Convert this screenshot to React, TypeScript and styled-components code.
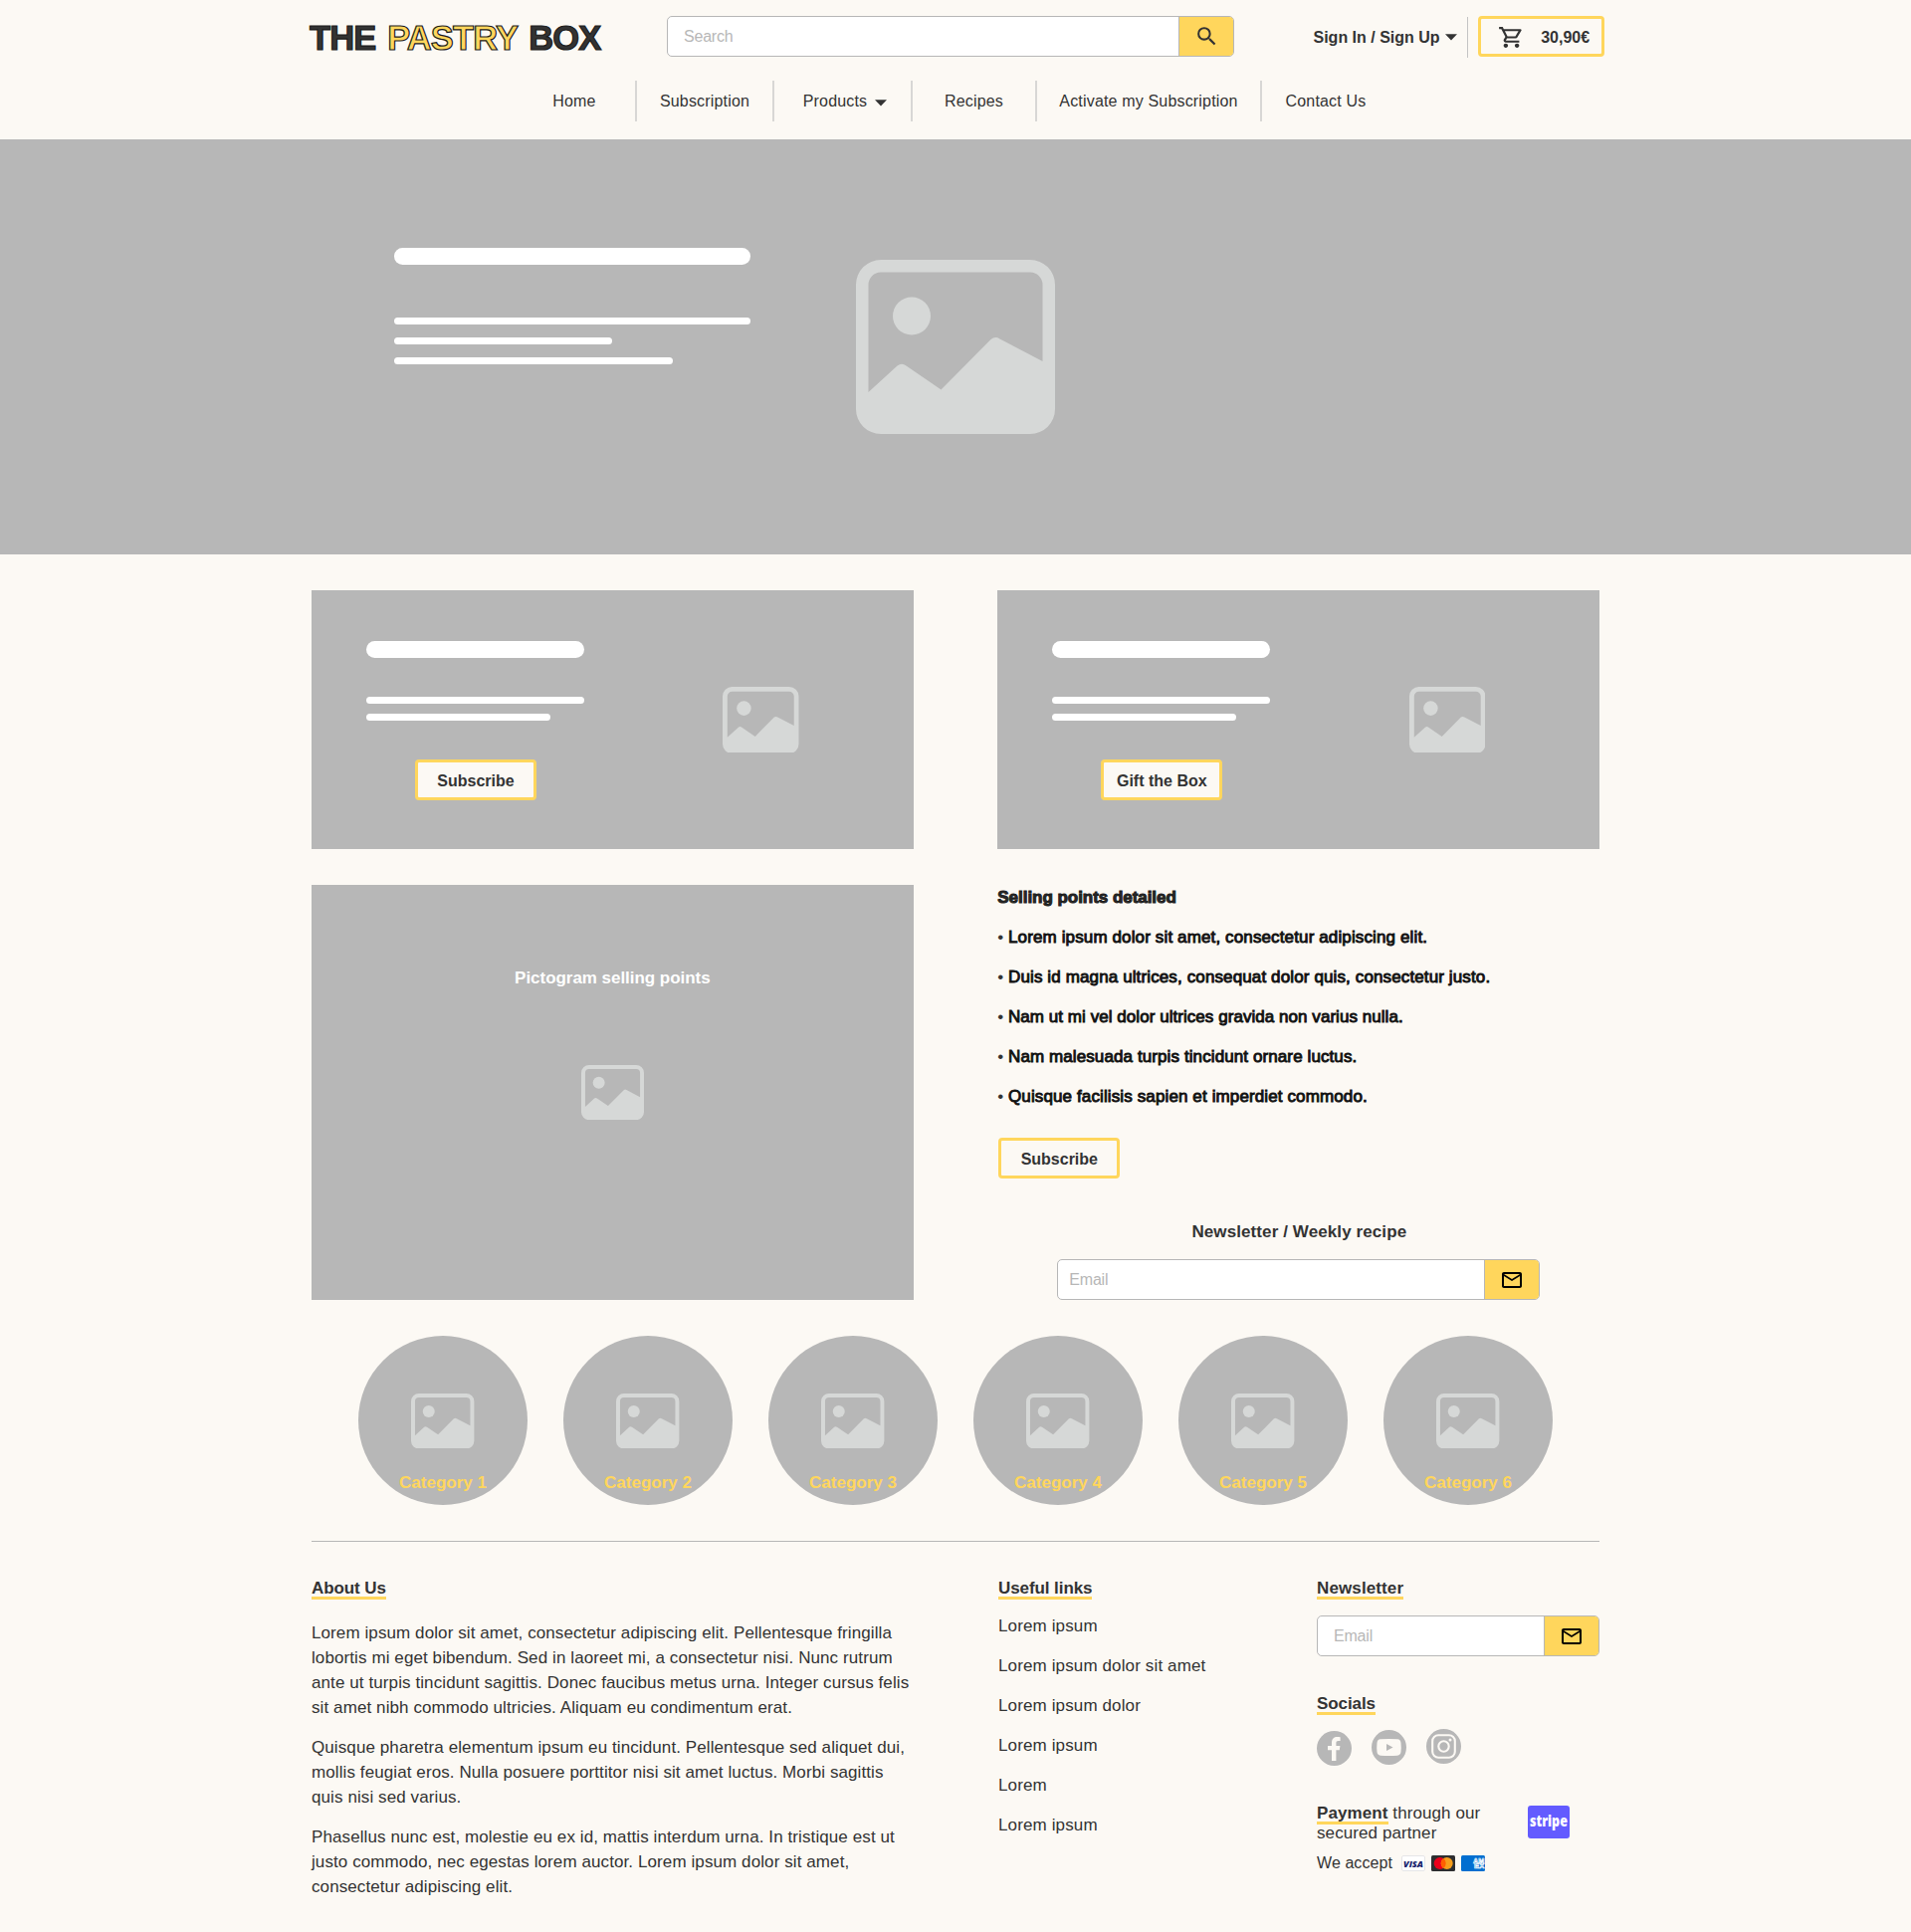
import React from "react";
import styled, { createGlobalStyle } from "styled-components";

const font = '"Liberation Sans", Arial, sans-serif';
const yellow = "#ffd65c";
const grey = "#b7b7b7";
const ink = "#333333";
const cream = "#fcf9f4";

const GlobalStyle = createGlobalStyle`
  * { box-sizing: border-box; }
  body { margin: 0; background: ${cream}; font-family: ${font}; color: ${ink}; }
  h2, h3, p, ul { margin: 0; padding: 0; }
  ul { list-style: none; }
  a { color: inherit; text-decoration: none; }
  button { font-family: inherit; cursor: pointer; }
  svg { display: block; flex: none; }
`;

const Page = styled.div`
  width: 1920px;
  height: 1941px;
  overflow: hidden;
`;

/* Header */
const Header = styled.header`
  height: 140px;
  padding-top: 16px;
`;
const TopBar = styled.div`
  display: flex;
  align-items: flex-start;
  height: 41px;
  padding-left: 311px;
`;
const Logo = styled.a`
  width: 359px;
  padding-top: 2px;
  font-size: 34.5px;
  line-height: 41px;
  font-weight: 700;
  letter-spacing: -0.85px;
  word-spacing: 3px;
  white-space: nowrap;
  -webkit-text-stroke: 1.2px #1c1c1c;
`;
const LogoAccent = styled.span`
  color: ${yellow};
`;
const Field = styled.form<{ $width: number; $button: number }>`
  display: grid;
  grid-template-columns: 1fr ${(p) => p.$button}px;
  width: ${(p) => p.$width}px;
  height: 41px;
  border: 1px solid ${grey};
  border-radius: 5px;
  background: #fff;
  overflow: hidden;
`;
const Input = styled.input<{ $pad: number }>`
  min-width: 0;
  border: 0;
  padding: 0 0 0 ${(p) => p.$pad}px;
  background: transparent;
  font: 16px ${font};
  letter-spacing: -0.2px;
  outline: none;
  &::placeholder {
    color: ${grey};
    opacity: 1;
  }
`;
const FieldButton = styled.button`
  display: flex;
  align-items: center;
  justify-content: center;
  padding: 0;
  border: 0;
  border-left: 1px solid ${grey};
  background: ${yellow};
`;
const SignIn = styled.a`
  display: flex;
  align-items: center;
  gap: 5px;
  height: 41px;
  margin-left: 79.5px;
  padding-top: 2px;
  font-size: 16px;
  font-weight: 700;
  white-space: nowrap;
`;
const AccountDivider = styled.span`
  width: 1px;
  height: 41px;
  margin: 1px 10px 0 10.5px;
  background: #c4c4c4;
`;
const CartButton = styled.button`
  display: flex;
  align-items: center;
  justify-content: space-between;
  width: 127px;
  height: 41px;
  padding: 2px 12px 0 17px;
  border: 3px solid ${yellow};
  border-radius: 4px;
  background: transparent;
  color: ${ink};
  font-size: 16px;
  font-weight: 700;
`;
const Nav = styled.nav`
  display: flex;
  margin: 24px 0 0 516px;
`;
const NavItem = styled.a<{ $width: number; $last?: boolean; $shift?: number }>`
  display: flex;
  align-items: center;
  justify-content: center;
  gap: 8px;
  width: ${(p) => p.$width}px;
  height: 41px;
  padding-left: ${(p) => p.$shift ?? 0}px;
  border-right: ${(p) => (p.$last ? "0" : "2px solid #d8d7d5")};
  font-size: 16px;
  letter-spacing: 0.17px;
  white-space: nowrap;
`;
const NavCaret = styled.span`
  padding-top: 3px;
`;

/* Placeholders */
const Hero = styled.section`
  display: flex;
  align-items: flex-start;
  height: 417px;
  padding-left: 396px;
  background: ${grey};
`;
const HeroCopy = styled.div`
  width: 464px;
  padding-top: 109px;
`;
const HeroArt = styled.div`
  padding-top: 121px;
`;
const TitleBar = styled.div<{ $width: number; $after: number }>`
  width: ${(p) => p.$width}px;
  height: 17px;
  margin-bottom: ${(p) => p.$after}px;
  border-radius: 8.5px;
  background: #fff;
`;
const TextBar = styled.div<{ $width: number; $after: number }>`
  width: ${(p) => p.$width}px;
  height: 7px;
  margin-bottom: ${(p) => p.$after}px;
  border-radius: 3.5px;
  background: #fff;
`;

/* Main */
const Container = styled.div`
  width: 1294px;
  margin: 0 auto;
`;
const Main = styled.main`
  display: flex;
  flex-direction: column;
  gap: 36px;
  padding: 36px 0;
`;
const TwoColumns = styled.div`
  display: grid;
  grid-template-columns: 604.7px 604.7px;
  justify-content: space-between;
`;
const PromoCard = styled.section`
  display: flex;
  height: 260px;
  padding-left: 55px;
  background: ${grey};
`;
const PromoCopy = styled.div`
  width: 358.3px;
  padding-top: 51px;
`;
const PromoArt = styled.div`
  padding-top: 96.5px;
`;
const OutlineButton = styled.button<{ $left?: number; $top?: number }>`
  display: block;
  width: 122px;
  height: 41px;
  margin: ${(p) => p.$top ?? 0}px 0 0 ${(p) => p.$left ?? 0}px;
  padding: 2px 0 0;
  border: 3px solid ${yellow};
  border-radius: 4px;
  background: ${cream};
  color: ${ink};
  font-size: 16px;
  font-weight: 700;
  white-space: nowrap;
`;
const Pictogram = styled.section`
  display: flex;
  flex-direction: column;
  align-items: center;
  height: 417px;
  padding-top: 84px;
  background: ${grey};
`;
const PictogramTitle = styled.h2`
  margin-bottom: 77px;
  color: #fff;
  font-size: 17px;
  line-height: 20px;
  font-weight: 700;
  letter-spacing: -0.04px;
`;
const Selling = styled.section`
  height: 417px;
  margin-top: -7px;
`;
const SellingTitle = styled.h2`
  font-size: 17px;
  line-height: 40px;
  font-weight: 700;
  letter-spacing: -0.04px;
  color: #292929;
  -webkit-text-stroke: 1px #1d1d1d;
`;
const SellingPoint = styled.li`
  font-size: 17px;
  line-height: 40px;
  white-space: nowrap;
`;
const PointText = styled.span<{ $spacing: number }>`
  color: #111;
  letter-spacing: ${(p) => p.$spacing}px;
  -webkit-text-stroke: 0.9px #111;
`;
const WeeklyTitle = styled.h2`
  width: 485px;
  margin: 44px 0 17px 60.5px;
  font-size: 17px;
  line-height: 20px;
  font-weight: 700;
  letter-spacing: 0.1px;
  text-align: center;
`;
const Indent = styled.div`
  padding-left: 60px;
`;
const Categories = styled.div`
  display: flex;
  justify-content: center;
  gap: 36px;
`;
const Category = styled.a`
  display: flex;
  flex-direction: column;
  align-items: center;
  gap: 24px;
  width: 170px;
  height: 170px;
  padding-top: 57.5px;
  border-radius: 50%;
  background: ${grey};
  color: ${yellow};
  font-size: 17px;
  line-height: 21px;
  font-weight: 700;
`;

/* Footer */
const Footer = styled.footer`
  display: grid;
  grid-template-columns: 690px 320px 284px;
  padding-top: 36px;
  border-top: 1px solid ${grey};
  font-size: 17px;
`;
const Heading = styled.h3<{ $spacing?: number }>`
  display: inline-block;
  height: 22px;
  border-bottom: 3px solid ${yellow};
  font-size: 17px;
  line-height: 22px;
  font-weight: 700;
  letter-spacing: ${(p) => p.$spacing ?? -0.08}px;
  vertical-align: top;
`;
const Column = styled.div`
  display: flex;
  flex-direction: column;
  align-items: flex-start;
`;
const Paragraphs = styled.div`
  display: flex;
  flex-direction: column;
  gap: 15px;
  margin-top: 21px;
  line-height: 25px;
  letter-spacing: 0.095px;
  white-space: nowrap;
`;
const Links = styled.ul`
  margin-top: 7px;
  line-height: 40px;
  letter-spacing: 0.13px;
`;
const NewsletterSlot = styled.div`
  margin: 16px 0 37px;
`;
const Socials = styled.div`
  display: flex;
  gap: 20px;
  margin: 14px 0 37px;
`;
const Social = styled.a<{ $drop: number }>`
  height: 35px;
  margin-top: ${(p) => p.$drop}px;
`;
const PaymentRow = styled.div`
  display: flex;
  gap: 47px;
`;
const PaymentText = styled.p`
  width: 165px;
  padding-top: 1px;
  line-height: 20px;
  letter-spacing: 0.09px;
  white-space: nowrap;
`;
const PaymentWord = styled.strong`
  display: inline-block;
  height: 21px;
  margin-bottom: -1px;
  border-bottom: 3px solid ${yellow};
  line-height: 20px;
  vertical-align: top;
`;
const StripeSlot = styled.div`
  padding-top: 3px;
`;
const AcceptRow = styled.div`
  display: flex;
  align-items: flex-start;
  gap: 6px;
  margin-top: 9px;
  font-size: 16px;
  line-height: 22px;
`;
const AcceptLabel = styled.span`
  margin-right: 3px;
  letter-spacing: 0.08px;
`;
const CardSlot = styled.span`
  padding-top: 3px;
`;

function ImageIcon({ width }: { width: number }) {
  return (
    <svg width={width} height={width * 0.875} viewBox="0 0 200 175">
      <path
        fill="#d6d8d7"
        fillRule="evenodd"
        d="M25 0H175A25 25 0 0 1 200 25V150A25 25 0 0 1 175 175H25A25 25 0 0 1 0 150V25A25 25 0 0 1 25 0ZM25 12.5A12.5 12.5 0 0 0 12.5 25V133L41.5 106.5Q46 103 50.500 106.500L85.500 130.500L135.500 80Q140 76.500 144.500 79.500L187.500 102V25A12.500 12.500 0 0 0 175 12.500Z"
      />
      <circle cx="56" cy="56.500" r="19" fill="#d6d8d7" />
    </svg>
  );
}

function Caret() {
  return (
    <svg width="12" height="7" viewBox="0 0 12 7">
      <path d="M0 .3h12L6 6.600z" fill={ink} />
    </svg>
  );
}

function SearchIcon() {
  return (
    <svg width="25" height="25" viewBox="0 0 24 24" fill={ink}>
      <path d="M15.500 14h-.79l-.28-.27A6.471 6.471 0 0 0 16 9.500 6.500 6.500 0 1 0 9.500 16c1.610 0 3.090-.590 4.230-1.570l.270.280v.790l5 4.990L20.490 19l-4.990-5zm-6 0C7.010 14 5 11.990 5 9.500S7.010 5 9.500 5 14 7.010 14 9.500 11.990 14 9.500 14z" />
    </svg>
  );
}

function CartIcon() {
  return (
    <svg width="27" height="25" viewBox="0 0 24 24" preserveAspectRatio="none" fill={ink}>
      <path d="M15.550 13c.750 0 1.410-.410 1.750-1.030l3.580-6.490A.996.996 0 0 0 20.010 4H5.210l-.940-2H1v2h2l3.600 7.590-1.350 2.440C4.520 15.370 5.480 17 7 17h12v-2H7l1.100-2h7.450zM6.160 6h12.150l-2.760 5H8.530L6.160 6zM7 18c-1.100 0-1.990.900-1.990 2S5.900 22 7 22s2-.900 2-2-.900-2-2-2zm10 0c-1.100 0-1.990.900-1.990 2s.890 2 1.990 2 2-.900 2-2-.900-2-2-2z" />
    </svg>
  );
}

function MailIcon() {
  return (
    <svg width="24" height="24" viewBox="0 0 24 24">
      <path d="M22 6c0-1.100-.900-2-2-2H4c-1.100 0-2 .900-2 2v12c0 1.100.900 2 2 2h16c1.100 0 2-.900 2-2V6zm-2 0l-8 5-8-5h16zm0 12H4V8l8 5 8-5v10z" />
    </svg>
  );
}

function FacebookIcon() {
  return (
    <svg width="35" height="35" viewBox="0 0 35 35">
      <circle cx="17.500" cy="17.500" r="17.500" fill={grey} />
      <path
        d="M15 30V19.300h-4v-4.200h4v-3.300c0-3.900 2.200-5.800 5.600-5.800 1.500 0 2.400.100 3 .200v3.800h-2c-1.700 0-2.200.900-2.200 2.200v2.900h4l-.600 4.200h-3.400V30z"
        fill={cream}
      />
    </svg>
  );
}

function YoutubeIcon() {
  return (
    <svg width="35" height="35" viewBox="0 0 35 35">
      <circle cx="17.500" cy="17.500" r="17.500" fill={grey} />
      <path
        d="M9 9.300Q17.500 8.500 26 9.300Q29.200 9.600 29.500 13Q30 17.500 29.500 22Q29.200 25.400 26 25.700Q17.500 26.500 9 25.700Q5.800 25.400 5.500 22Q5 17.500 5.500 13Q5.800 9.600 9 9.300Z"
        fill={cream}
      />
      <path d="M15 14l6.500 3.500-6.500 3.500z" fill={grey} />
    </svg>
  );
}

function InstagramIcon() {
  return (
    <svg width="35" height="35" viewBox="0 0 35 35" fill="none" stroke={cream}>
      <circle cx="17.500" cy="17.500" r="17.500" fill={grey} stroke="none" />
      <rect x="6.200" y="6.200" width="22.600" height="22.600" rx="6" strokeWidth="2.100" />
      <circle cx="17.500" cy="17.500" r="5.200" strokeWidth="2.100" />
      <circle cx="24" cy="11" r="1.500" fill={cream} stroke="none" />
    </svg>
  );
}

function StripeLogo() {
  return (
    <svg width="42" height="33" viewBox="0 0 42 33">
      <rect width="42" height="33" rx="3" fill="#635bff" />
      <text
        transform="translate(2 21) scale(.75 1)"
        fill="#fff"
        fontFamily='"Open Sans", sans-serif'
        fontWeight="800"
        fontSize="16.500"
        textLength="50.500"
        lengthAdjust="spacingAndGlyphs"
      >
        stripe
      </text>
    </svg>
  );
}

function VisaCard() {
  return (
    <svg width="24" height="16" viewBox="0 0 24 16">
      <rect x=".5" y=".5" width="23" height="15" rx="1.500" fill="#fff" stroke="#e6e6e8" />
      <text x="2" y="11.500" fill="#171e6c" fontFamily='"Open Sans", sans-serif' fontStyle="italic" fontWeight="800" fontSize="9" textLength="20" lengthAdjust="spacingAndGlyphs">
        VISA
      </text>
    </svg>
  );
}

function MastercardCard() {
  return (
    <svg width="24" height="16" viewBox="0 0 24 16">
      <rect width="24" height="16" rx="1.500" fill="#2e2e30" />
      <circle cx="8.700" cy="8" r="6" fill="#eb001b" />
      <circle cx="15.700" cy="8" r="6" fill="#f79e1b" />
      <path d="M12.200 3.100a6 6 0 0 1 0 9.800a6 6 0 0 1 0-9.800z" fill="#ff5f00" />
    </svg>
  );
}

function AmexCard() {
  return (
    <svg width="24" height="16" viewBox="0 0 24 16">
      <rect width="24" height="16" rx="1.500" fill="#016fd0" />
      <g fill="none" stroke="#fff" strokeWidth=".6" fontFamily='"Liberation Sans", sans-serif' fontWeight="700" fontSize="7">
        <text x="12" y="7.700" textLength="11.300" lengthAdjust="spacingAndGlyphs">AM</text>
        <text x="13" y="13.300" textLength="10.300" lengthAdjust="spacingAndGlyphs">EX</text>
      </g>
    </svg>
  );
}

function Promo({ action }: { action: string }) {
  return (
    <PromoCard>
      <PromoCopy>
        <TitleBar $width={219} $after={39} />
        <TextBar $width={219} $after={10} />
        <TextBar $width={185} $after={39} />
        <OutlineButton $left={49}>{action}</OutlineButton>
      </PromoCopy>
      <PromoArt>
        <ImageIcon width={76.5} />
      </PromoArt>
    </PromoCard>
  );
}

const points = [
  { text: "Lorem ipsum dolor sit amet, consectetur adipiscing elit.", spacing: 0.13 },
  { text: "Duis id magna ultrices, consequat dolor quis, consectetur justo.", spacing: 0.125 },
  { text: "Nam ut mi vel dolor ultrices gravida non varius nulla.", spacing: 0.05 },
  { text: "Nam malesuada turpis tincidunt ornare luctus.", spacing: 0.1 },
  { text: "Quisque facilisis sapien et imperdiet commodo.", spacing: 0.12 },
];

const links = ["Lorem ipsum", "Lorem ipsum dolor sit amet", "Lorem ipsum dolor", "Lorem ipsum", "Lorem", "Lorem ipsum"];

export default function App() {
  return (
    <Page>
      <GlobalStyle />
      <Header>
        <TopBar>
          <Logo>
            THE <LogoAccent>PASTRY</LogoAccent> BOX
          </Logo>
          <Field $width={570} $button={55}>
            <Input $pad={16} placeholder="Search" />
            <FieldButton type="button" aria-label="Search">
              <SearchIcon />
            </FieldButton>
          </Field>
          <SignIn>
            Sign In / Sign Up
            <Caret />
          </SignIn>
          <AccountDivider />
          <CartButton>
            <CartIcon />
            30,90€
          </CartButton>
        </TopBar>
        <Nav>
          <NavItem $width={124}>Home</NavItem>
          <NavItem $width={138}>Subscription</NavItem>
          <NavItem $width={139} $shift={5}>
            Products
            <NavCaret>
              <Caret />
            </NavCaret>
          </NavItem>
          <NavItem $width={125}>Recipes</NavItem>
          <NavItem $width={226}>Activate my Subscription</NavItem>
          <NavItem $width={128} $last>
            Contact Us
          </NavItem>
        </Nav>
      </Header>

      <Hero>
        <HeroCopy>
          <TitleBar $width={358} $after={53} />
          <TextBar $width={358} $after={13} />
          <TextBar $width={219} $after={13} />
          <TextBar $width={280} $after={0} />
        </HeroCopy>
        <HeroArt>
          <ImageIcon width={200} />
        </HeroArt>
      </Hero>

      <Container>
        <Main>
          <TwoColumns>
            <Promo action="Subscribe" />
            <Promo action="Gift the Box" />
          </TwoColumns>
          <TwoColumns>
            <Pictogram>
              <PictogramTitle>Pictogram selling points</PictogramTitle>
              <ImageIcon width={63} />
            </Pictogram>
            <Selling>
              <SellingTitle>Selling points detailed</SellingTitle>
              <ul>
                {points.map((point) => (
                  <SellingPoint key={point.text}>
                    • <PointText $spacing={point.spacing}>{point.text}</PointText>
                  </SellingPoint>
                ))}
              </ul>
              <OutlineButton $top={21} $left={1}>
                Subscribe
              </OutlineButton>
              <WeeklyTitle>Newsletter / Weekly recipe</WeeklyTitle>
              <Indent>
                <Field $width={485} $button={55}>
                  <Input $pad={11} placeholder="Email" />
                  <FieldButton type="button" aria-label="Subscribe by email">
                    <MailIcon />
                  </FieldButton>
                </Field>
              </Indent>
            </Selling>
          </TwoColumns>
          <Categories>
            {[1, 2, 3, 4, 5, 6].map((n) => (
              <Category key={n}>
                <ImageIcon width={63.4} />
                Category {n}
              </Category>
            ))}
          </Categories>
        </Main>

        <Footer>
          <Column>
            <Heading>About Us</Heading>
            <Paragraphs>
              <p>
                Lorem ipsum dolor sit amet, consectetur adipiscing elit. Pellentesque fringilla
                <br />
                lobortis mi eget bibendum. Sed in laoreet mi, a consectetur nisi. Nunc rutrum
                <br />
                ante ut turpis tincidunt sagittis. Donec faucibus metus urna. Integer cursus felis
                <br />
                sit amet nibh commodo ultricies. Aliquam eu condimentum erat.
              </p>
              <p>
                Quisque pharetra elementum ipsum eu tincidunt. Pellentesque sed aliquet dui,
                <br />
                mollis feugiat eros. Nulla posuere porttitor nisi sit amet luctus. Morbi sagittis
                <br />
                quis nisi sed varius.
              </p>
              <p>
                Phasellus nunc est, molestie eu ex id, mattis interdum urna. In tristique est ut
                <br />
                justo commodo, nec egestas lorem auctor. Lorem ipsum dolor sit amet,
                <br />
                consectetur adipiscing elit.
              </p>
            </Paragraphs>
          </Column>
          <Column>
            <Heading>Useful links</Heading>
            <Links>
              {links.map((link, i) => (
                <li key={i}>
                  <a>{link}</a>
                </li>
              ))}
            </Links>
          </Column>
          <Column>
            <Heading $spacing={0.12}>Newsletter</Heading>
            <NewsletterSlot>
              <Field $width={284} $button={55}>
                <Input $pad={16} placeholder="Email" />
                <FieldButton type="button" aria-label="Subscribe by email">
                  <MailIcon />
                </FieldButton>
              </Field>
            </NewsletterSlot>
            <Heading>Socials</Heading>
            <Socials>
              <Social $drop={2}>
                <FacebookIcon />
              </Social>
              <Social $drop={1}>
                <YoutubeIcon />
              </Social>
              <Social $drop={0}>
                <InstagramIcon />
              </Social>
            </Socials>
            <PaymentRow>
              <PaymentText>
                <PaymentWord>Payment</PaymentWord> through our
                <br />
                secured partner
              </PaymentText>
              <StripeSlot>
                <StripeLogo />
              </StripeSlot>
            </PaymentRow>
            <AcceptRow>
              <AcceptLabel>We accept</AcceptLabel>
              <CardSlot>
                <VisaCard />
              </CardSlot>
              <CardSlot>
                <MastercardCard />
              </CardSlot>
              <CardSlot>
                <AmexCard />
              </CardSlot>
            </AcceptRow>
          </Column>
        </Footer>
      </Container>
    </Page>
  );
}
